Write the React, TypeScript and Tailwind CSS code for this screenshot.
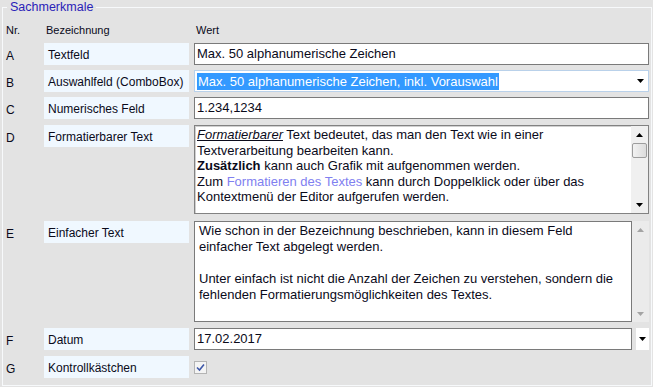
import React from 'react';

type RowProps = {
  letter: string;
  label: string;
  className?: string;
  children: React.ReactNode;
};

function Row({ letter, label, className, children }: RowProps) {
  return (
    <div className={`flex ${className ?? ''}`}>
      <div className="w-[38px] h-[22px] leading-[22px] text-[12px] pt-[2px]">{letter}</div>
      <div className="w-[145px] h-[22px] leading-[22px] bg-[#f0f8ff] pl-[4px] text-[12px] pt-[1px]">{label}</div>
      <div className="ml-[5px] w-[455px]">{children}</div>
    </div>
  );
}

function ArrowUp({ color = '#000' }: { color?: string }) {
  return (
    <svg width="7" height="4" viewBox="0 0 7 4">
      <path d="M3.5 0 L7 4 L0 4 Z" fill={color} />
    </svg>
  );
}

function ArrowDown({ color = '#000' }: { color?: string }) {
  return (
    <svg width="7" height="4" viewBox="0 0 7 4">
      <path d="M0 0 L7 0 L3.5 4 Z" fill={color} />
    </svg>
  );
}

export default function App() {
  return (
    <div className="w-[653px] h-[387px] bg-[#e3e3e3] font-['Liberation_Sans',Arial,sans-serif] text-[#0a0a1a] overflow-hidden">
      <div className="pt-[7px] pl-[2px]">
        <div className="relative w-[650px] h-[379px] border border-[#f7f9fb]">
          <div className="absolute left-[4px] top-[-9px] px-[3px] bg-[#e3e3e3] text-[12.5px] leading-[16px] text-[#2a22b8]">
            Sachmerkmale
          </div>

          <div className="pl-[3px]">
            <div className="flex mt-[14px] h-[16px] text-[11px] leading-[16px]">
              <div className="w-[38px]">Nr.</div>
              <div className="w-[145px] pl-[2px]">Bezeichnung</div>
              <div className="ml-[5px] pl-[2px]">Wert</div>
            </div>

            <Row letter="A" label="Textfeld" className="mt-[5px]">
              <div className="h-[22px] bg-white border border-[#7a7a7a] pl-[2px] text-[13px] leading-[20px] whitespace-nowrap">
                Max. 50 alphanumerische Zeichen
              </div>
            </Row>

            <Row letter="B" label="Auswahlfeld (ComboBox)" className="mt-[5px]">
              <div className="h-[22px] bg-white border border-[#b9d1ea] flex items-center pl-[2px] pr-[3px]">
                <span className="bg-[#3399ff] text-white text-[13px] leading-[17px] px-px whitespace-nowrap">
                  Max. 50 alphanumerische Zeichen, inkl. Vorauswahl
                </span>
                <div className="ml-auto flex items-center pr-[1px]">
                  <ArrowDown />
                </div>
              </div>
            </Row>

            <Row letter="C" label="Numerisches Feld" className="mt-[5px]">
              <div className="h-[22px] bg-white border border-[#7a7a7a] pl-[2px] text-[13px] leading-[20px]">
                1.234,1234
              </div>
            </Row>

            <Row letter="D" label="Formatierbarer Text" className="mt-[6px]">
              <div className="h-[89px] bg-white border border-[#828282] shadow-[inset_1px_1px_0_#d0d0d0] flex">
                <div className="flex-1 pl-[2px] pt-[1px] text-[13px] leading-[15.5px] whitespace-nowrap">
                  <div>
                    <span className="italic underline">Formatierbarer</span> Text bedeutet, das man den Text wie in einer
                  </div>
                  <div>Textverarbeitung bearbeiten kann.</div>
                  <div>
                    <span className="font-bold">Zusätzlich</span> kann auch Grafik mit aufgenommen werden.
                  </div>
                  <div>
                    Zum <span className="text-[#8080f0]">Formatieren des Textes</span> kann durch Doppelklick oder über das
                  </div>
                  <div>Kontextmenü der Editor aufgerufen werden.</div>
                </div>
                <div className="w-[17px] bg-[#f0f0f0] flex flex-col items-center">
                  <div className="h-[17px] flex items-center justify-center">
                    <ArrowUp />
                  </div>
                  <div className="w-[15px] h-[15px] ml-[-1px] rounded-[2px] border border-[#9d9d9d] bg-gradient-to-r from-[#f2f2f2] to-[#dcdcdc]" />
                  <div className="mt-auto h-[17px] flex items-center justify-center">
                    <ArrowDown />
                  </div>
                </div>
              </div>
            </Row>

            <Row letter="E" label="Einfacher Text" className="mt-[7px]">
              <div className="flex h-[101px]">
                <div className="w-[438px] bg-white border border-[#7a7a7a] pl-[4px] pt-[1px] text-[13px] leading-[16px] whitespace-nowrap">
                  <div>Wie schon in der Bezeichnung beschrieben, kann in diesem Feld</div>
                  <div>einfacher Text abgelegt werden.</div>
                  <div>&nbsp;</div>
                  <div>Unter einfach ist nicht die Anzahl der Zeichen zu verstehen, sondern die</div>
                  <div>fehlenden Formatierungsmöglichkeiten des Textes.</div>
                </div>
                <div className="flex-1 bg-[#ebebeb] flex flex-col items-center">
                  <div className="h-[17px] flex items-center justify-center">
                    <ArrowUp color="#a3a3a3" />
                  </div>
                  <div className="mt-auto h-[17px] flex items-center justify-center">
                    <ArrowDown color="#a3a3a3" />
                  </div>
                </div>
              </div>
            </Row>

            <Row letter="F" label="Datum" className="mt-[6px]">
              <div className="flex h-[22px]">
                <div className="w-[438px] bg-white border border-[#7a7a7a] pl-[2px] text-[13px] leading-[20px]">
                  17.02.2017
                </div>
                <div className="ml-[4px] w-[13px] bg-white flex items-center justify-center">
                  <ArrowDown />
                </div>
              </div>
            </Row>

            <Row letter="G" label="Kontrollkästchen" className="mt-[6px]">
              <div className="h-[22px] flex items-center">
                <div className="w-[13px] h-[13px] border border-[#b4b4b4] bg-[#f4f4f4] flex items-center justify-center">
                  <svg width="9" height="9" viewBox="0 0 9 9">
                    <path d="M1 4.5 L3.5 7 L8 1.5" fill="none" stroke="#3f58a8" strokeWidth="1.6" />
                  </svg>
                </div>
              </div>
            </Row>
          </div>
        </div>
      </div>
    </div>
  );
}
